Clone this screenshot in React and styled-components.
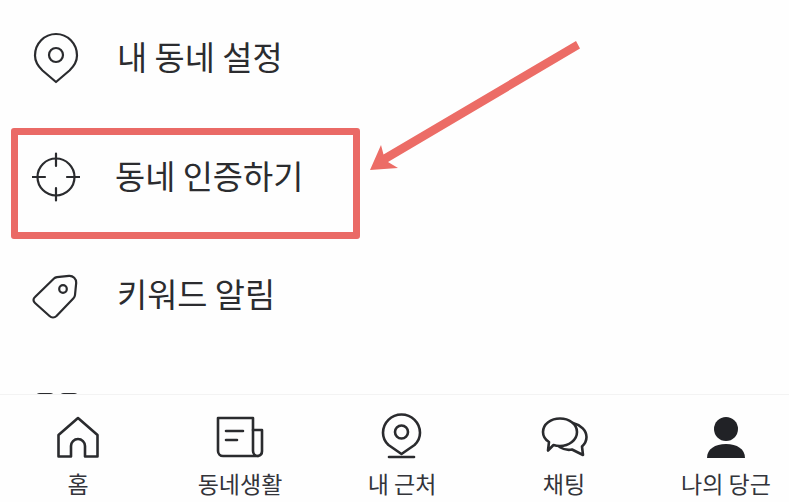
import React from "react";
import styled, { createGlobalStyle } from "styled-components";

const Global = createGlobalStyle`
  html, body { margin: 0; padding: 0; background: #fff; }
  #root { width: 789px; height: 502px; }
`;

const Screen = styled.div`
  position: relative;
  width: 789px;
  height: 502px;
  overflow: hidden;
  display: flex;
  flex-direction: column;
  background: #fefefe;
  font-family: "Noto Sans CJK KR", "Noto Sans", sans-serif;
`;

const Menu = styled.div`
  flex: 0 0 395px;
  overflow: hidden;
  margin-top: -1px;
  padding-left: 32px;
`;

const Row = styled.div`
  height: 118.5px;
  display: flex;
  align-items: center;
  gap: ${(p) => p.$gap}px;
`;

const RowIcon = styled.svg`
  flex: none;
  width: 48px;
  height: 52px;
  fill: none;
  stroke: #2a2b2e;
  stroke-width: 2.2;
  stroke-linejoin: round;
  stroke-linecap: round;
`;

const RowLabel = styled.span`
  font-size: 32.8px;
  line-height: 44px;
  color: #2b2c2f;
  margin-top: ${(p) => p.$lift}px;
`;

const TabBar = styled.nav`
  flex: 1;
  display: flex;
  justify-content: space-between;
  padding: 18px 13px 0 28px;
  background: #fefefe;
  border-top: 1px solid #f3f3f3;
  z-index: 1;
`;

const Tab = styled.div`
  width: 100px;
  display: flex;
  flex-direction: column;
  align-items: center;
`;

const TabIcon = styled.svg`
  width: 50px;
  height: 46px;
  fill: ${(p) => (p.$filled ? "#212226" : "none")};
  stroke: ${(p) => (p.$filled ? "none" : "#2a2b2e")};
  stroke-width: 2.6;
  stroke-linejoin: round;
  stroke-linecap: round;
`;

const TabLabel = styled.span`
  margin-top: 6px;
  font-size: 23px;
  line-height: 36px;
  color: #33343a;
  white-space: nowrap;
`;

const Highlight = styled.div`
  position: absolute;
  left: 11px;
  top: 128px;
  width: 349px;
  height: 111px;
  box-sizing: border-box;
  border: 7px solid #ea6a66;
  border-radius: 3px;
`;

const Arrow = styled.svg`
  position: absolute;
  left: 360px;
  top: 35px;
  width: 230px;
  height: 145px;
`;

const tabs = [
  {
    label: "홈",
    icon: (
      <path d="M5.500 43.500V22L25 5l19.500 17v21.500H32V33a7 7 0 0 0-14 0v10.500Z" />
    ),
  },
  {
    label: "동네생활",
    icon: (
      <>
        <path d="M3 5h35v33a5 5 0 0 0 5 5H8a5 5 0 0 1-5-5Z" />
        <path d="M38 17h9v21a5 5 0 0 1-4 5" />
        <path d="M11 18h17M11 27h11" />
      </>
    ),
  },
  {
    label: "내 근처",
    icon: (
      <>
        <path d="M24.500 41 L11.500 32 C7.800 28.600 6 24.500 6 19.800 C6 9.600 14.300 1.500 24.500 1.500 S43 9.600 43 19.800 C43 24.500 41.200 28.600 37.500 32 Z" />
        <circle cx="24.500" cy="19" r="6.500" />
        <path d="M12 44h25" />
      </>
    ),
  },
  {
    label: "채팅",
    icon: (
      <>
        <path d="M10 29C6 26.500 4 23 4 19 4 11 12 5.500 21 5.500S38 11 38 19 30 33 21 33c-2.500 0-4.600-.3-6.500-1L9 37.500Z" />
        <path d="M34 10c8 2 13.500 7.500 13.500 14 0 4-1.800 7-4.500 9.500L44 42l-11-5.500c-4 .8-8.500 0-12.500-2.500" />
      </>
    ),
  },
  {
    label: "나의 당근",
    filled: true,
    icon: (
      <>
        <circle cx="25" cy="16" r="12" />
        <path d="M6 45C6 36 14 31 25 31s19 5 19 14Z" />
      </>
    ),
  },
];

export default function App() {
  return (
    <Screen>
      <Global />
      <Menu>
        <Row $gap={37}>
          <RowIcon viewBox="0 0 48 52">
            <path d="M24 50 10.500 38.500C5.800 34 3 29 3 23.500 3 11.500 12.400 2 24 2s21 9.500 21 21.500c0 5.500-2.800 10.500-7.500 15Z" />
            <circle cx="24" cy="23" r="7" />
          </RowIcon>
          <RowLabel $lift={-5}>내 동네 설정</RowLabel>
        </Row>
        <Row $gap={35}>
          <RowIcon viewBox="0 0 48 52">
            <circle cx="24" cy="26" r="18.500" />
            <path d="M0.500 26H13M35 26H47.500M24 2.500V15M24 37V49.500" />
          </RowIcon>
          <RowLabel $lift={-3}>동네 인증하기</RowLabel>
        </Row>
        <Row $gap={37}>
          <RowIcon viewBox="0 0 48 52">
            <path d="M3 28 22 9.500c.8-.8 1.700-1.200 3-1.400L37 6.800c4-.3 7.500 3 7.200 7L43 26c-.1 1.200-.6 2.300-1.500 3.200L24.500 47c-2 2-5 2-7 0L3 34c-2-1.800-2-4.200 0-6Z" />
            <circle cx="31" cy="20" r="3.800" />
          </RowIcon>
          <RowLabel $lift={-5}>키워드 알림</RowLabel>
        </Row>
        <Row $gap={37}>
          <RowIcon viewBox="0 0 48 52">
            <rect x="4" y="6" width="18" height="18" rx="4" />
            <rect x="28" y="6" width="18" height="18" rx="4" />
          </RowIcon>
        </Row>
      </Menu>
      <TabBar>
        {tabs.map((t) => (
          <Tab key={t.label}>
            <TabIcon viewBox="0 0 50 46" $filled={t.filled}>
              {t.icon}
            </TabIcon>
            <TabLabel>{t.label}</TabLabel>
          </Tab>
        ))}
      </TabBar>
      <Highlight />
      <Arrow viewBox="0 0 230 145">
        <path
          d="M10 135 L21 110 L23.500 119.500 L216 6 L220 13.500 L28 127 L38 133 Z"
          fill="#ec6c66"
        />
      </Arrow>
    </Screen>
  );
}
